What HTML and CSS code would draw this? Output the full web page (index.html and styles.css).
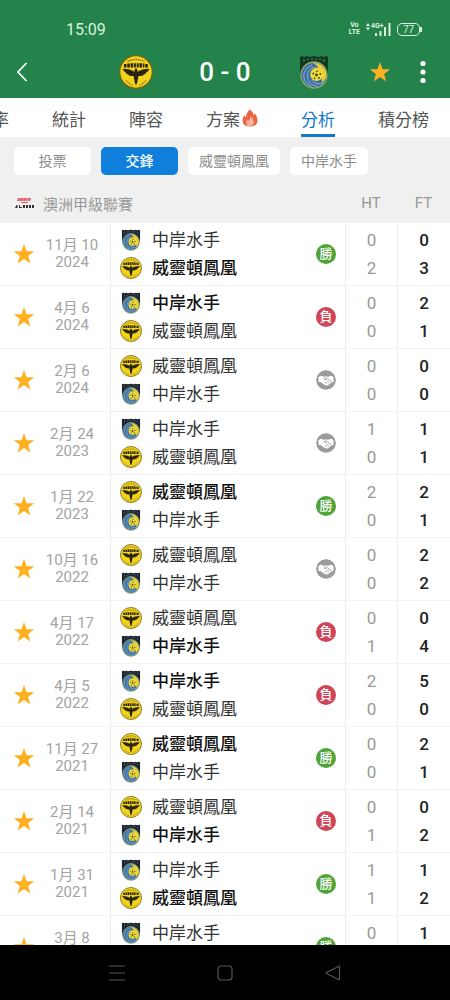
FILE: index.html
```
<!DOCTYPE html>
<html lang="zh-Hant">
<head>
<meta charset="utf-8">
<meta name="viewport" content="width=device-width, initial-scale=1">
<title>對賽分析</title>
<link rel="stylesheet" href="styles.css">
</head>
<body>
<svg class="defs" aria-hidden="true">
  <symbol id="star" viewBox="0 0 24 24"><path fill="#ffb020" d="M12 1l2.800 7.900 8.400.2-6.700 5.100 2.400 8.100L12 17.500l-6.900 4.800 2.400-8.100L.8 9.100l8.400-.2z"/></symbol>
  <symbol id="phoenix" viewBox="0 0 34 34">
    <circle cx="17" cy="17" r="16.300" fill="#f3d31c" stroke="#6d6218" stroke-width="1.200"/>
    <path d="M8.500 6.500q8.500-4 17 0" fill="none" stroke="#8a7718" stroke-width="1.400" stroke-dasharray="1.500 .6"/>
    <path d="M5 9h2.500v3.500H5zM8.300 8.500h2.500v4H8.300zM11.600 8.300h2.500v4.200h-2.500zM14.900 8.300h2v4.200h-2zM17.700 8.300h2v4.200h-2zM20.500 8.300H23v4.200h-2.500zM23.800 8.500h1.600v4h-1.600zM26.200 9h2.600v3.500h-2.600z" fill="#2a2612"/>
    <path d="M3.500 13.800q8 .2 11.800 3l.6-2.500 1.100-1 1.100 1 .6 2.500q3.800-2.800 11.800-3-1 3-3.500 4 .3 1-2.500 2 0 1.200-5 1.200l-1.300 6.500-1.200 3-1.200-3L14.500 21q-5 0-5-1.200-2.800-1-2.500-2-2.500-1-3.500-4z" fill="#2a2612"/>
    <path d="M7 25.500q3.500 4 7.500 5M27 25.500q-3.500 4-7.500 5" fill="none" stroke="#9b861c" stroke-width="1.400" stroke-dasharray="1.500 .8"/>
  </symbol>
  <symbol id="mariners" viewBox="0 0 30 34">
    <path d="M1 2l2-1 2 1 3-1 2 1 5-1 5 1 2-1 3 1 2-1 2 1v15q-1 7-7 10H8q-6-3-7-10z" fill="currentColor"/>
    <path d="M5 4v3M9 3.500v2M13 3v2M17 3v2M21 3.500v2M25 4v3" stroke="#77877f" stroke-width=".9"/>
    <circle cx="15" cy="20" r="13" fill="#3b70a5" stroke="#9aa765" stroke-width="1.300"/>
    <path d="M13.500 8Q24 7.500 27 17q1.500 7-4.500 11 1.500-3-.5-4.500L12 22q-2-5 2.500-8.500 2.500-1.500 5-.5-1.500-3.500-6-5z" fill="#ebcf35"/>
    <circle cx="17.500" cy="20" r="6" fill="#f2dc38"/>
    <path d="M19 31.500Q8 30 8.500 20.500 9 14 15 12M13 31.500Q3 27 5 18q2-6 8-8M24 28q-8 2.500-11.500-3" fill="none" stroke="#8fb5cc" stroke-width=".9"/>
    <g fill="#3a4224"><circle cx="17.500" cy="20" r="1.400"/><circle cx="14.300" cy="18.500" r=".9"/><circle cx="18" cy="16.300" r=".9"/><circle cx="21.300" cy="19" r=".9"/><circle cx="20" cy="23" r=".9"/><circle cx="15.500" cy="23.300" r=".9"/></g>
  </symbol>
  <symbol id="draw" viewBox="0 0 20 20">
    <circle cx="10" cy="10" r="10" fill="#9b9b9b"/>
    <path d="M2.500 7l2.300-1.200L8 6.800l2-.6 2 .6 3.200-1L17.500 7v5l-2 .5-3.500 2.700q-2 1-4-.6L4.500 12l-2 0z" fill="#fff"/>
    <path d="M10.500 7L8 9q1.500 1.200 3.500-.4l4 3.400M9 12l2 1.800M11 11l2.200 1.800" fill="none" stroke="#9b9b9b" stroke-width=".9"/>
  </symbol>
</svg>

<header class="top">
  <div class="status">
    <time>15:09</time>
    <div class="status-icons">
      <span class="volte"><span>Vo</span><span>LTE</span></span>
      <span class="signal">
        <svg width="4" height="8" viewBox="0 0 4 8" aria-hidden="true"><path d="M0 3l2-3 2 3zM0 4.500h4l-2 3z" fill="#d9f5df"/></svg>
        <span class="net">4G+</span>
        <svg class="bars" width="16" height="13" viewBox="0 0 16 13" aria-hidden="true"><path d="M0 10h2v3H0zM4.500 8h2v5h-2zM9 4h2v9H9zM13.500 0h2v13h-2z" fill="#d9f5df"/></svg>
      </span>
      <span class="battery">77</span>
    </div>
  </div>
  <div class="match-bar">
    <button class="icon-btn" aria-label="返回"><svg width="14" height="22" viewBox="0 0 14 22"><path d="M11.500 2L3 11l8.500 9" fill="none" stroke="#fff" stroke-width="1.800"/></svg></button>
    <div class="versus">
      <svg class="crest-lg" role="img" aria-label="威靈頓鳳凰"><use href="#phoenix"/></svg>
      <h1 class="score">0 - 0</h1>
      <svg class="crest-lg" role="img" aria-label="中岸水手"><use href="#mariners"/></svg>
    </div>
    <div class="actions">
      <button class="icon-btn" aria-label="收藏"><svg width="22" height="22"><use href="#star"/></svg></button>
      <button class="icon-btn" aria-label="更多"><svg width="6" height="24" viewBox="0 0 6 24"><g fill="#fff"><circle cx="3" cy="3.500" r="2.600"/><circle cx="3" cy="12" r="2.600"/><circle cx="3" cy="20.500" r="2.600"/></g></svg></button>
    </div>
  </div>
</header>

<nav class="tabs">
  <a href="#odds">賠率</a>
  <a href="#stats">統計</a>
  <a href="#lineup">陣容</a>
  <a href="#tips">方案<svg width="16" height="18" viewBox="0 0 16 18" aria-hidden="true"><path d="M7.500.5q4 2 4 6 1-1 1-2.500Q15.500 7 15.500 11q0 6.500-7.500 6.500T.5 11q0-3 2-5 .3 2 1.500 2.500Q4 5 7.500.5z" fill="#ea6540"/><path d="M8.500 7q3.500 3 3.300 6-.3 4-3.800 4.200-3.500-.2-3.800-3.700 0-1.500 1.300-3l1 1.500Q8.500 10 8.500 7z" fill="#f9b49a"/></svg></a>
  <a class="active" href="#analysis" aria-current="page">分析</a>
  <a href="#standings">積分榜</a>
</nav>

<div class="filters">
  <button class="chip">投票</button>
  <button class="chip selected">交鋒</button>
  <button class="chip">威靈頓鳳凰</button>
  <button class="chip">中岸水手</button>
</div>

<main class="results">
<table>
  <colgroup><col class="c-fav"><col class="c-date"><col><col class="c-badge"><col class="c-ht"><col class="c-ft"></colgroup>
  <thead>
    <tr>
      <th colspan="4" scope="col"><div class="league"><svg width="19" height="12" viewBox="0 0 19 12" aria-hidden="true"><path d="M3 1h13l-1 3H2zM6 5h7v1H6z" fill="#dd5964"/><path d="M5 1v3M8 1v3M11 1v3M13 1v3" stroke="#f0f0f0" stroke-width=".5"/><path d="M0 11l1.500-3h1v3zM4 8h1v2h2v1H4zM8 8h2v3H8zM11 8h2v3h-2zM14 8h2v3h-2zM17 8h2v3h-2z" fill="#333"/></svg><span>澳洲甲級聯賽</span></div></th>
      <th scope="col">HT</th>
      <th scope="col">FT</th>
    </tr>
  </thead>
  <tbody>
    <tr>
      <td><button class="fav" aria-label="收藏"><svg><use href="#star"/></svg></button></td>
      <td class="date">11月 10<br>2024</td>
      <td class="teams"><div class="team"><svg><use href="#mariners"/></svg>中岸水手</div><div class="team won"><svg><use href="#phoenix"/></svg>威靈頓鳳凰</div></td>
      <td><span class="badge win">勝</span></td>
      <td class="ht">0<br>2</td><td class="ft">0<br>3</td>
    </tr>
    <tr>
      <td><button class="fav" aria-label="收藏"><svg><use href="#star"/></svg></button></td>
      <td class="date">4月 6<br>2024</td>
      <td class="teams"><div class="team won"><svg><use href="#mariners"/></svg>中岸水手</div><div class="team"><svg><use href="#phoenix"/></svg>威靈頓鳳凰</div></td>
      <td><span class="badge loss">負</span></td>
      <td class="ht">0<br>0</td><td class="ft">2<br>1</td>
    </tr>
    <tr>
      <td><button class="fav" aria-label="收藏"><svg><use href="#star"/></svg></button></td>
      <td class="date">2月 6<br>2024</td>
      <td class="teams"><div class="team"><svg><use href="#phoenix"/></svg>威靈頓鳳凰</div><div class="team"><svg><use href="#mariners"/></svg>中岸水手</div></td>
      <td><svg class="badge" role="img" aria-label="和"><use href="#draw"/></svg></td>
      <td class="ht">0<br>0</td><td class="ft">0<br>0</td>
    </tr>
    <tr>
      <td><button class="fav" aria-label="收藏"><svg><use href="#star"/></svg></button></td>
      <td class="date">2月 24<br>2023</td>
      <td class="teams"><div class="team"><svg><use href="#mariners"/></svg>中岸水手</div><div class="team"><svg><use href="#phoenix"/></svg>威靈頓鳳凰</div></td>
      <td><svg class="badge" role="img" aria-label="和"><use href="#draw"/></svg></td>
      <td class="ht">1<br>0</td><td class="ft">1<br>1</td>
    </tr>
    <tr>
      <td><button class="fav" aria-label="收藏"><svg><use href="#star"/></svg></button></td>
      <td class="date">1月 22<br>2023</td>
      <td class="teams"><div class="team won"><svg><use href="#phoenix"/></svg>威靈頓鳳凰</div><div class="team"><svg><use href="#mariners"/></svg>中岸水手</div></td>
      <td><span class="badge win">勝</span></td>
      <td class="ht">2<br>0</td><td class="ft">2<br>1</td>
    </tr>
    <tr>
      <td><button class="fav" aria-label="收藏"><svg><use href="#star"/></svg></button></td>
      <td class="date">10月 16<br>2022</td>
      <td class="teams"><div class="team"><svg><use href="#phoenix"/></svg>威靈頓鳳凰</div><div class="team"><svg><use href="#mariners"/></svg>中岸水手</div></td>
      <td><svg class="badge" role="img" aria-label="和"><use href="#draw"/></svg></td>
      <td class="ht">0<br>0</td><td class="ft">2<br>2</td>
    </tr>
    <tr>
      <td><button class="fav" aria-label="收藏"><svg><use href="#star"/></svg></button></td>
      <td class="date">4月 17<br>2022</td>
      <td class="teams"><div class="team"><svg><use href="#phoenix"/></svg>威靈頓鳳凰</div><div class="team won"><svg><use href="#mariners"/></svg>中岸水手</div></td>
      <td><span class="badge loss">負</span></td>
      <td class="ht">0<br>1</td><td class="ft">0<br>4</td>
    </tr>
    <tr>
      <td><button class="fav" aria-label="收藏"><svg><use href="#star"/></svg></button></td>
      <td class="date">4月 5<br>2022</td>
      <td class="teams"><div class="team won"><svg><use href="#mariners"/></svg>中岸水手</div><div class="team"><svg><use href="#phoenix"/></svg>威靈頓鳳凰</div></td>
      <td><span class="badge loss">負</span></td>
      <td class="ht">2<br>0</td><td class="ft">5<br>0</td>
    </tr>
    <tr>
      <td><button class="fav" aria-label="收藏"><svg><use href="#star"/></svg></button></td>
      <td class="date">11月 27<br>2021</td>
      <td class="teams"><div class="team won"><svg><use href="#phoenix"/></svg>威靈頓鳳凰</div><div class="team"><svg><use href="#mariners"/></svg>中岸水手</div></td>
      <td><span class="badge win">勝</span></td>
      <td class="ht">0<br>0</td><td class="ft">2<br>1</td>
    </tr>
    <tr>
      <td><button class="fav" aria-label="收藏"><svg><use href="#star"/></svg></button></td>
      <td class="date">2月 14<br>2021</td>
      <td class="teams"><div class="team"><svg><use href="#phoenix"/></svg>威靈頓鳳凰</div><div class="team won"><svg><use href="#mariners"/></svg>中岸水手</div></td>
      <td><span class="badge loss">負</span></td>
      <td class="ht">0<br>1</td><td class="ft">0<br>2</td>
    </tr>
    <tr>
      <td><button class="fav" aria-label="收藏"><svg><use href="#star"/></svg></button></td>
      <td class="date">1月 31<br>2021</td>
      <td class="teams"><div class="team"><svg><use href="#mariners"/></svg>中岸水手</div><div class="team won"><svg><use href="#phoenix"/></svg>威靈頓鳳凰</div></td>
      <td><span class="badge win">勝</span></td>
      <td class="ht">1<br>1</td><td class="ft">1<br>2</td>
    </tr>
    <tr>
      <td><button class="fav" aria-label="收藏"><svg><use href="#star"/></svg></button></td>
      <td class="date">3月 8<br>2020</td>
      <td class="teams"><div class="team"><svg><use href="#mariners"/></svg>中岸水手</div><div class="team won"><svg><use href="#phoenix"/></svg>威靈頓鳳凰</div></td>
      <td><span class="badge win">勝</span></td>
      <td class="ht">0<br>1</td><td class="ft">1<br>3</td>
    </tr>
  </tbody>
</table>
</main>

<footer class="sysnav">
  <button aria-label="選單"><svg width="18" height="18" viewBox="0 0 18 18"><path d="M1 2h16M1 9h16M1 16h16" stroke="#555" stroke-width="1.200"/></svg></button>
  <button aria-label="主畫面"><svg width="18" height="18" viewBox="0 0 18 18"><rect x="2" y="2" width="14" height="14" rx="3" fill="none" stroke="#555" stroke-width="1.200"/></svg></button>
  <button aria-label="返回"><svg width="18" height="18" viewBox="0 0 18 18"><path d="M15.500 3v12q0 1-1 .5L2.500 9.600q-.8-.6 0-1.200l12-5.900q1-.5 1 .5z" fill="none" stroke="#555" stroke-width="1.200"/></svg></button>
</footer>
</body>
</html>
```

FILE: styles.css
```
* { box-sizing: border-box; }

body {
  margin: 0;
  height: 100vh;
  display: flex;
  flex-direction: column;
  background: #fff;
  color: #222;
  font-family: Roboto, "Noto Sans CJK TC", sans-serif;
}

button {
  margin: 0;
  padding: 0;
  border: 0;
  background: none;
  font: inherit;
  color: inherit;
}

svg { display: block; flex: none; }

.defs { position: absolute; width: 0; height: 0; }

/* Header */
.top {
  flex: none;
  background: #23834a;
  color: #fff;
}

.status {
  display: flex;
  align-items: center;
  justify-content: space-between;
  padding: 18px 30px 0 66px;
  height: 40px;
  color: #d9f5df;
  font-size: 16px;
}

.status-icons { display: flex; align-items: center; gap: 6px; }

.volte {
  display: flex;
  flex-direction: column;
  align-items: center;
  font-size: 7px;
  font-weight: 700;
  line-height: 7px;
}

.signal {
  display: grid;
  grid-template-columns: 4px 20px;
  align-items: start;
  column-gap: 1px;
}

.net {
  grid-area: 1 / 2;
  font-size: 7px;
  font-weight: 700;
  line-height: 7px;
}

.bars { grid-area: 1 / 2; justify-self: end; }

.battery {
  position: relative;
  width: 23px;
  height: 13px;
  border: 1px solid #d9f5df;
  border-radius: 5px;
  font-size: 10px;
  line-height: 11px;
  text-align: center;
}

.battery::after {
  content: "";
  position: absolute;
  right: -3px;
  top: 3px;
  width: 2px;
  height: 5px;
  background: #d9f5df;
}

.match-bar {
  display: grid;
  grid-template-columns: 93px 1fr 93px;
  align-items: center;
  height: 58px;
  padding-top: 6px;
}

.icon-btn {
  display: flex;
  align-items: center;
  justify-content: center;
  width: 43px;
  height: 44px;
}

.versus {
  display: flex;
  align-items: center;
  justify-content: center;
  gap: 46px;
}

.crest-lg { width: 34px; height: 34px; color: #0d3b22; }

.score {
  margin: 0;
  font-size: 26px;
  font-weight: 500;
  line-height: 34px;
  white-space: nowrap;
}

.actions { display: flex; justify-content: flex-end; padding-right: 6px; }

/* Tabs */
.tabs {
  display: flex;
  flex: none;
  gap: 43px;
  height: 39px;
  overflow: hidden;
  background: #fff;
}

.tabs a {
  display: flex;
  flex: none;
  align-items: center;
  height: 39px;
  padding-top: 4px;
  border-bottom: 3px solid transparent;
  color: #555;
  font-size: 17px;
  text-decoration: none;
}

.tabs a:first-child { margin-left: -25px; }

.tabs svg { margin-left: 2px; }

.tabs .active { color: #1579c9; border-color: #1579c9; }

/* Filter chips */
.filters {
  display: flex;
  flex: none;
  gap: 10px;
  padding: 10px 14px;
  background: #f0f0f0;
}

.chip {
  min-width: 77px;
  height: 28px;
  padding: 0 11px;
  border-radius: 5px;
  background: #fff;
  color: #8c8c8c;
  font-size: 14px;
  line-height: 28px;
  white-space: nowrap;
}

.chip.selected { background: #107fdc; color: #fff; font-weight: 500; }

/* Head-to-head table */
.results { flex: 1; min-height: 0; overflow: hidden; }

table {
  width: 100%;
  border-collapse: separate;
  border-spacing: 0;
  table-layout: fixed;
}

.c-fav { width: 40px; }
.c-date { width: 71px; }
.c-badge { width: 36px; }
.c-ht { width: 52px; }
.c-ft { width: 53px; }

th {
  height: 38px;
  padding: 0 0 2px;
  background: #f0f0f0;
  color: #999;
  font-size: 15px;
  font-weight: 400;
  text-align: center;
}

.league {
  display: flex;
  align-items: center;
  gap: 9px;
  padding-left: 15px;
}

td {
  height: 63px;
  padding: 0;
  border-bottom: 1px solid #f3f3f3;
  vertical-align: middle;
}

.fav { display: block; padding-left: 13px; }
.fav svg { width: 22px; height: 22px; }

.date {
  padding-right: 6px;
  border-right: 1px solid #ededed;
  color: #a3a3a3;
  font-size: 15px;
  line-height: 17px;
  text-align: center;
  white-space: nowrap;
}

.teams { padding-left: 9px; }

.team {
  display: flex;
  align-items: center;
  gap: 10px;
  height: 28px;
  color: #333;
  font-size: 17px;
  line-height: 28px;
  white-space: nowrap;
}

.team svg { width: 22px; height: 22px; color: #1b2433; }

.won { color: #111; font-weight: 500; }

.badge {
  display: block;
  width: 20px;
  height: 20px;
  margin-left: 7px;
  border-radius: 50%;
  color: #fff;
  font-size: 13px;
  font-weight: 500;
  line-height: 20px;
  text-align: center;
}

.win { background: #4fa337; }
.loss { background: #d04558; }

.ht, .ft {
  border-left: 1px solid #ededed;
  font-size: 17px;
  line-height: 28px;
  text-align: center;
}

.ht { color: #999; }
.ft { color: #222; font-weight: 500; }

/* System navigation */
.sysnav {
  display: flex;
  flex: none;
  align-items: center;
  justify-content: center;
  gap: 90px;
  height: 55px;
  background: #000;
}
```
